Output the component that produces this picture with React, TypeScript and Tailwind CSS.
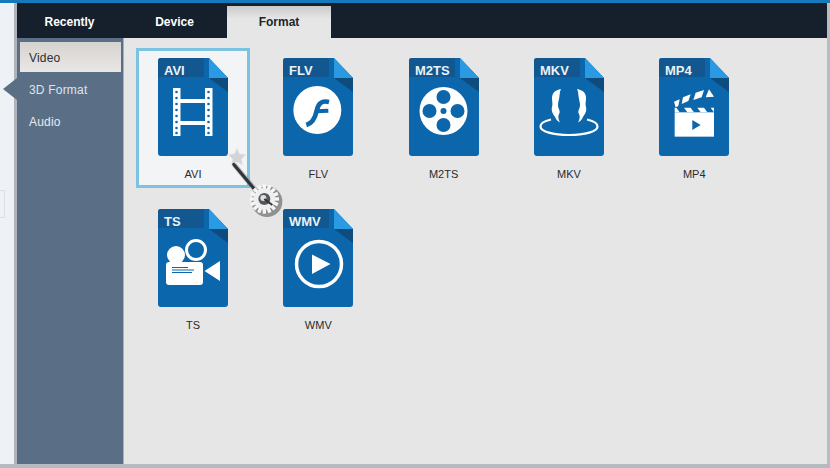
import React from "react";

const WHITE = "#ffffff";
const BLUE = "#0b66ab";

function Glyph({ name }: { name: string }) {
  switch (name) {
    case "AVI":
      return (
        <g fill={WHITE}>
          <rect x="15" y="30" width="7.5" height="48" />
          <rect x="47" y="30" width="7.5" height="48" />
          <rect x="22" y="41" width="25" height="4" />
          <rect x="22" y="63" width="25" height="4" />
          {[34, 40, 46, 52, 58, 64, 70, 75].map((y) => (
            <g key={y} fill={BLUE}>
              <circle cx="18.5" cy={y} r="1.3" />
              <circle cx="50.5" cy={y} r="1.3" />
            </g>
          ))}
        </g>
      );
    case "FLV":
      return (
        <g transform="translate(0 22) scale(0.3333)">
          <circle cx="103" cy="90" r="72" fill={WHITE} />
          <path d="M138 66C114 60 105 74 101 92C97 112 90 129 70 135" fill="none" stroke={BLUE} strokeWidth="14" />
          <path d="M98 94L136 92" fill="none" stroke={BLUE} strokeWidth="12" />
        </g>
      );
    case "M2TS":
      return (
        <g>
          <circle cx="34.5" cy="53" r="24" fill={WHITE} />
          <circle cx="34.5" cy="39" r="7" fill={BLUE} />
          <circle cx="34.5" cy="67" r="7" fill={BLUE} />
          <circle cx="20.5" cy="53" r="7" fill={BLUE} />
          <circle cx="48.5" cy="53" r="7" fill={BLUE} />
          <circle cx="34.5" cy="53" r="3" fill={BLUE} />
        </g>
      );
    case "MKV":
      return (
        <g fill={WHITE}>
          <path d="M27 31C21 32 18 35 18 40C18 44 19 46 18 49C17 53 19 56 21 59C22 61 23 63 26 64.500C24 61 24 58 25 56C27 53 24 51 24 47C24 44 25 42 25.500 38C25.800 35 26 33 27 31Z" />
          <path d="M43 31C49 32 52 35 52 40C52 44 51 46 52 49C53 53 51 56 49 59C48 61 47 63 44 64.500C46 61 46 58 45 56C43 53 46 51 46 47C46 44 45 42 44.500 38C44.200 35 44 33 43 31Z" />
          <path
            d="M17 61.500C10 63 6.500 65.500 6.500 68.500C6.500 73.500 19 77 35 77S63.500 73.500 63.500 68.500C63.500 65.500 60 63 53 61.500"
            fill="none"
            stroke={WHITE}
            strokeWidth="2.200"
          />
        </g>
      );
    case "MP4":
      return (
        <g transform="translate(0 22) scale(0.3333)" fill={WHITE}>
          <rect x="47" y="97" width="118" height="73" />
          <path d="M45 65L62 58L58 78L50 82Z" />
          <path d="M72 52L95 43L88 63L68 72Z" />
          <path d="M110 38L135 30L128 52L103 60Z" />
          <path d="M150 28L165 50L140 52Z" />
          <path d="M47 83L52 83L62 97L47 97Z" />
          <path d="M75 83L95 83L105 97L85 97Z" />
          <path d="M115 83L135 83L145 97L125 97Z" />
          <path d="M155 83L165 83L165 97Z" />
          <path d="M100 120V150L125 135Z" fill={BLUE} />
        </g>
      );
    case "TS":
      return (
        <g>
          <circle cx="38" cy="41" r="9.5" fill="none" stroke={WHITE} strokeWidth="3" />
          <circle cx="18" cy="46" r="9" fill={WHITE} />
          <path d="M8 56q0-3 3-3h31q3 0 3 3v17q0 3-3 3H11q-3 0-3-3z" fill={WHITE} />
          <path d="M46.500 62l15.500-10v20z" fill={WHITE} />
          <rect x="14" y="58" width="16" height="1" fill={BLUE} />
          <rect x="14" y="60.500" width="22" height="1" fill={BLUE} />
          <rect x="14" y="63" width="20" height="1" fill={BLUE} />
        </g>
      );
    default:
      return (
        <g>
          <circle cx="36" cy="55" r="22.500" fill="none" stroke={WHITE} strokeWidth="3.500" />
          <path d="M29 45.500v19.500l18.500-10z" fill={WHITE} />
        </g>
      );
  }
}

function FileIcon({ name }: { name: string }) {
  return (
    <svg width="70" height="98" viewBox="0 0 70 98" className="block">
      <path d="M3 0H51L70 20V95Q70 98 67 98H3Q0 98 0 95V3Q0 0 3 0Z" fill={BLUE} />
      <path d="M3 0H46V19H0V3Q0 0 3 0Z" fill="#12578f" />
      <path d="M51 0L70 20H51Z" fill="#2a9be2" />
      <path d="M51 20H70V34Z" fill="#0f4c7e" />
      <text
        x="6"
        y="17"
        fill="#e8f2fa"
        fontSize="13"
        fontWeight="700"
        fontFamily="'Liberation Sans', Arial, sans-serif"
      >
        {name}
      </text>
      <Glyph name={name} />
    </svg>
  );
}

function Tile({ name, selected }: { name: string; selected?: boolean }) {
  return (
    <div
      className={
        selected
          ? "flex h-[140px] w-[114px] flex-col items-center border-[3px] border-[#7cc3e2] bg-[#f3f4f6] pt-[7px]"
          : "flex h-[140px] w-[114px] flex-col items-center border-[3px] border-transparent pt-[7px]"
      }
    >
      <FileIcon name={name} />
      <span className="mt-[11px] text-[11px] leading-[14px] text-[#2b2b2b]">{name}</span>
    </div>
  );
}

function CursorArt() {
  const teeth = Array.from({ length: 16 }, (_, i) => i * 22.5);
  return (
    <svg
      width="60"
      height="75"
      viewBox="0 0 180 225"
      className="absolute left-[225px] top-[145px]"
    >
      <path
        d="M36 8L44 26L64 28L50 42L54 62L36 52L18 62L22 42L8 28L28 26Z"
        fill="#d4d4d8"
        stroke="#eeeeee"
        strokeWidth="3"
      />
      <path d="M30 62L92 136" stroke="#8b8b8b" strokeWidth="15" strokeLinecap="round" opacity="0.55" />
      <path d="M26 58L86 130" stroke="#2f3438" strokeWidth="9" strokeLinecap="round" />
      <circle cx="126" cy="170" r="46" fill="#4a4a4a" opacity="0.55" />
      <g transform="translate(118 162)">
        {teeth.map((a) => (
          <rect key={a} x="-5" y="-44" width="10" height="16" fill="#f6f6f6" transform={`rotate(${a})`} />
        ))}
        <circle r="32" fill="#efefef" />
        <circle r="18" fill="#55585c" />
        <circle cx="-3" cy="-3" r="9" fill="#e0e0e0" />
        <path d="M0 0L24 18" stroke="#333" strokeWidth="6" />
      </g>
    </svg>
  );
}

export default function App() {
  const names = ["FLV", "M2TS", "MKV", "MP4", "TS", "WMV"];
  return (
    <div className="relative flex h-[468px] w-[830px] flex-col overflow-hidden bg-[#eef1f6] font-['Liberation_Sans',Arial,sans-serif]">
      <div className="h-[3px] shrink-0 bg-[#1579bd]" />
      <div className="flex min-h-0 flex-1 pb-[4px] pl-[14px] pr-[3px] [box-shadow:inset_0_-4px_0_#b4bac2,inset_-3px_0_0_#b9bcc2]">
        <div className="flex min-w-0 flex-1 flex-col border-l-[3px] border-[#b0b4ba]">
          <div className="flex h-[35px] shrink-0 items-end bg-[#16202c]">
            <div className="flex h-[33px] w-[105px] items-center justify-center text-[12px] font-bold text-white">Recently</div>
            <div className="flex h-[33px] w-[105px] items-center justify-center text-[12px] font-bold text-white">Device</div>
            <div className="flex h-[32px] w-[104px] items-center justify-center bg-gradient-to-b from-[#c9c9c9] to-[#e6e6e6] to-40% text-[12px] font-bold text-[#20262c]">Format</div>
          </div>
          <div className="flex min-h-0 flex-1">
            <div className="flex w-[107px] shrink-0 flex-col border-r border-[#9fb2c4] bg-[#5a6f85] pl-[3px] pr-[2px] pt-[4px] text-[12px] tracking-[0.2px]">
              <div className="flex h-[30px] items-center bg-gradient-to-b from-[#d6d2cf] to-[#e9e8e6] pl-[9px] pt-px text-[#2b2f33]">Video</div>
              <div className="flex h-[34px] items-center pl-[9px] pt-px text-[#dfe5ea]">3D Format</div>
              <div className="flex h-[30px] items-center pl-[9px] pt-px text-[#e6ebef]">Audio</div>
            </div>
            <div className="min-w-0 flex-1 bg-[#e6e6e6] pl-[12px] pt-[10px]">
              <div className="grid grid-cols-[repeat(5,114px)] gap-x-[11.3px] gap-y-[11px]">
                <Tile name="AVI" selected />
                {names.map((n) => (
                  <Tile key={n} name={n} />
                ))}
              </div>
            </div>
          </div>
        </div>
      </div>
      <div className="absolute left-[3px] top-[78px] h-[22px] w-[14px] bg-[#5a6f85] [clip-path:polygon(100%_0,100%_100%,0_50%)]" />
      <div className="absolute left-0 top-[190px] h-[28px] w-[5px] border-y border-r border-[#dcdfe3]" />
      <CursorArt />
    </div>
  );
}
